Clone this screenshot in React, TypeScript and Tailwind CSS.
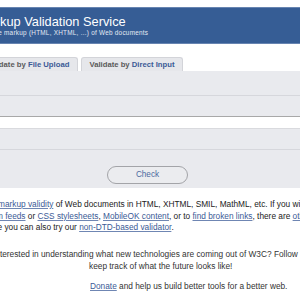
import React from 'react';

const Link: React.FC<{ children: React.ReactNode }> = ({ children }) => (
  <a href="#" className="text-[#3b5a96] underline decoration-[#6f86b3] underline-offset-[1px]">
    {children}
  </a>
);

const Tab: React.FC<{ label: string; width: string }> = ({ label, width }) => (
  <div
    className={`${width} h-[14px] flex items-center justify-center bg-[#e6e7eb] border border-b-0 border-[#d3d4d9] rounded-t-[3px] text-[7.7px] font-bold whitespace-nowrap`}
  >
    <span className="text-[#5a5a5a]">Validate by&nbsp;</span>
    <span className="text-[#3b5a96]">{label}</span>
  </div>
);

const App: React.FC = () => {
  return (
    <div className="w-[300px] h-[300px] overflow-hidden bg-white font-['Liberation_Sans',Arial,sans-serif] text-[#222]">
      {/* banner */}
      <div className="mt-[7px] h-[37px] bg-[#365d95] border-t border-b border-[#6784b1] pt-[6px] whitespace-nowrap">
        <div className="ml-[-22px] text-[12.8px] leading-[15px] text-white">Markup Validation Service</div>
        <div className="ml-[-29px] text-[6.4px] leading-[8px] tracking-[0.25px] text-[#e4eaf3]">
          Check the markup (HTML, XHTML, ...) of Web documents
        </div>
      </div>

      {/* tabs */}
      <div className="mt-[13px] ml-[-23px] flex gap-[3px]">
        <Tab label="File Upload" width="w-[101px]" />
        <Tab label="Direct Input" width="w-[102px]" />
      </div>

      {/* form panel */}
      <div className="h-[117px] bg-[#e9eaee] flex flex-col">
        <div className="h-[25px] border-b border-[#d6d7dc]" />
        <div className="h-[20px]" />
        <div className="h-[13px] bg-white border-t border-[#a8a8a8] border-b border-b-[#d9dade]" />
        <div className="h-[21px] border-b border-[#d6d7dc]" />
        <div className="pt-[10px] pl-[107px]">
          <button className="w-[81px] h-[18px] rounded-full border border-[#a3a4a8] bg-[#ebecef] text-[8.2px] text-[#4c69a0] leading-none">
            Check
          </button>
        </div>
      </div>

      {/* intro */}
      <div className="mt-[11px] text-[8.3px] leading-[11.5px] whitespace-nowrap">
        <div className="ml-[-2px]">
          <Link>markup validity</Link> of Web documents in HTML, XHTML, SMIL, MathML, etc. If you wish to validate
        </div>
        <div className="ml-[-4px]">
          <Link>m feeds</Link> or <Link>CSS stylesheets</Link>, <Link>MobileOK content</Link>, or to{' '}
          <Link>find broken links</Link>, there are <Link>other validators</Link>
        </div>
        <div className="ml-[-2.5px]">
          e you can also try our <Link>non-DTD-based validator</Link>.
        </div>
      </div>

      <div className="mt-[15.5px] text-[8.3px] leading-[11.5px] whitespace-nowrap text-[#333]">
        <div className="ml-[-7px]">
          Interested in understanding what new technologies are coming out of W3C? Follow
        </div>
        <div className="pl-[89px]">keep track of what the future looks like!</div>
      </div>

      <div className="mt-[9px] pl-[90px] text-[8.3px] leading-[11.5px] whitespace-nowrap text-[#333]">
        <Link>Donate</Link> and help us build better tools for a better web.
      </div>
    </div>
  );
};

export default App;
